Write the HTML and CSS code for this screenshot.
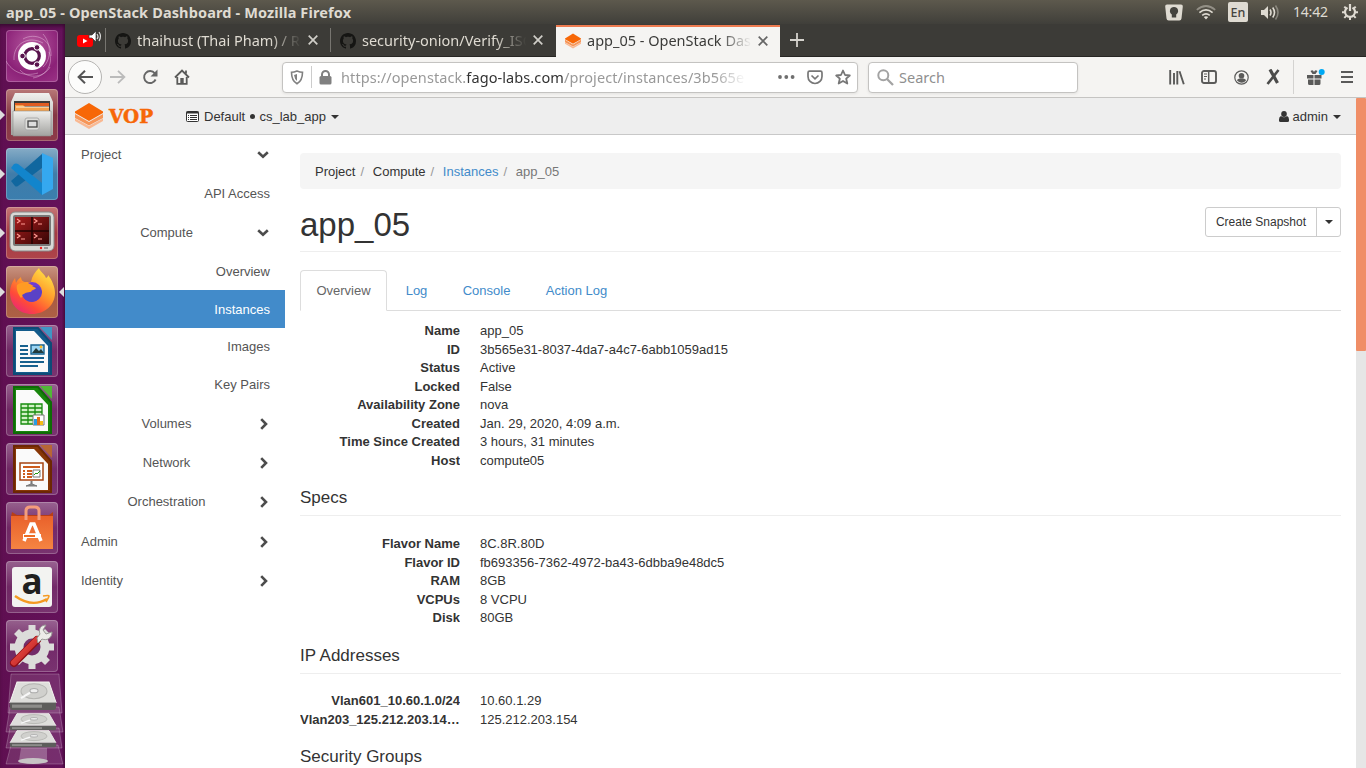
FILE: index.html
```html
<!DOCTYPE html>
<html lang="en">
<head>
<meta charset="utf-8">
<title>app_05 - OpenStack Dashboard</title>
<link rel="stylesheet" href="styles.css">
</head>
<body>
<svg class="defs" width="0" height="0" aria-hidden="true">
  <defs>
    <linearGradient id="metal" x1="0" y1="0" x2="0" y2="1"><stop offset="0" stop-color="#f0f0ee"/><stop offset="1" stop-color="#a2a29f"/></linearGradient>
    <linearGradient id="orange" x1="0" y1="0" x2="0" y2="1"><stop offset="0" stop-color="#e9612b"/><stop offset="1" stop-color="#f58442"/></linearGradient>
    <linearGradient id="flame" x1=".9" y1="0" x2=".2" y2="1"><stop offset="0" stop-color="#fff04d"/><stop offset=".45" stop-color="#ff9a2a"/><stop offset=".75" stop-color="#ff4b38"/><stop offset="1" stop-color="#e8257a"/></linearGradient>
    <linearGradient id="screen" x1="0" y1="0" x2="1" y2="1"><stop offset="0" stop-color="#a71c1c"/><stop offset="1" stop-color="#350505"/></linearGradient>
    <linearGradient id="red" x1="0" y1="0" x2="1" y2="1"><stop offset="0" stop-color="#f4574b"/><stop offset="1" stop-color="#b61a1f"/></linearGradient>
  </defs>
  <symbol id="stack" viewBox="0 0 28 26">
    <path fill="#f9b892" d="M0 15.500V18l14 8 14-8v-2.500L14 23z"/>
    <path fill="#f79557" d="M0 11v4l14 7.500L28 15v-4l-14 8z"/>
    <path fill="#f76707" d="M14 0 28 8.500v1.500L14 18 0 10V8.500z"/>
  </symbol>
  <symbol id="octocat" viewBox="0 0 16 16"><path fill="#151513" d="M8 0C3.580 0 0 3.580 0 8c0 3.540 2.290 6.530 5.470 7.590.4.070.55-.17.55-.38 0-.19-.01-.82-.01-1.490-2.010.37-2.530-.49-2.690-.94-.09-.23-.48-.94-.82-1.130-.28-.15-.68-.52-.01-.53.63-.01 1.080.58 1.230.82.72 1.210 1.870.87 2.330.66.07-.52.28-.87.51-1.070-1.780-.2-3.640-.89-3.640-3.950 0-.87.31-1.590.82-2.150-.08-.2-.36-1.020.08-2.120 0 0 .67-.21 2.200.82.64-.18 1.320-.27 2-.27s1.360.09 2 .27c1.530-1.040 2.200-.82 2.200-.82.44 1.100.16 1.920.08 2.120.51.56.82 1.270.82 2.150 0 3.070-1.870 3.750-3.650 3.950.29.25.54.73.54 1.480 0 1.070-.01 1.930-.01 2.200 0 .21.15.46.55.38A8.013 8.013 0 0 0 16 8c0-4.420-3.580-8-8-8z"/></symbol>
  <symbol id="close" viewBox="0 0 10 10"><path d="M.7.7l8.600 8.600M9.300.7.7 9.300" stroke="currentColor" stroke-width="1.700" fill="none"/></symbol>
  <symbol id="down" viewBox="0 0 12 8"><path d="M1.200 1.200 6 5.800l4.800-4.600" stroke="#4c4c4c" stroke-width="2.600" fill="none"/></symbol>
  <symbol id="right" viewBox="0 0 8 12"><path d="M1.200 1.200 6 6l-4.800 4.800" stroke="#4c4c4c" stroke-width="2.600" fill="none"/></symbol>
  <symbol id="drive" viewBox="0 0 48 28">
    <path d="M8 1h32l7 19H1z" fill="#dededb" stroke="#f5f5f2"/>
    <path d="M1 20h46v5q0 2-2 2H3q-2 0-2-2z" fill="#5d5d5b"/><path d="M3 22h30v3H3z" fill="#8d8d8a"/>
    <ellipse cx="25" cy="9.500" rx="13" ry="7" fill="#d0d0cd" stroke="#b3b3b0"/><ellipse cx="25" cy="9" rx="4" ry="2" fill="#eee" stroke="#aaa"/>
    <path d="M12 16l9-5" stroke="#f8f8f8" stroke-width="2"/>
  </symbol>
</svg>

<header class="panel">
  <span class="panel-title">app_05 - OpenStack Dashboard - Mozilla Firefox</span>
  <div class="indicators">
    <svg width="18" height="17" viewBox="0 0 18 17"><path fill="#dfdbd2" d="M2 .5h14q2 0 1.800 2l-1.300 12q-.2 2-2.200 2H3.700q-2 0-2.200-2L.2 2.500Q0 .5 2 .5z"/><path fill="#45443f" d="M9 3a4 4 0 0 1 2.200 7.400V13.500H6.800v-3.100A4 4 0 0 1 9 3z"/></svg>
    <svg class="wifi" width="20" height="15" viewBox="0 0 20 15" fill="none" stroke="#dfdbd2" stroke-width="1.700"><path opacity=".45" d="M.8 4.800q9.200-7.600 18.400 0"/><path d="M3.400 7.600q6.600-5.400 13.200 0M6.200 10.300q3.800-3 7.600 0"/><path d="M7.800 12 10 14.500 12.200 12q-2.200-1.500-4.400 0z" fill="#dfdbd2" stroke="none"/></svg>
    <span class="lang">En</span>
    <svg class="sound" width="20" height="17" viewBox="0 0 20 17"><path fill="#dfdbd2" d="M1 6h3l4-4v13l-4-4H1z"/><path fill="none" stroke="#dfdbd2" stroke-width="1.600" d="M10 5.500q2 3 0 6M12.700 3.500q3.600 5 0 10"/><path opacity=".4" fill="none" stroke="#dfdbd2" stroke-width="1.600" d="M15.500 1.500q5 7 0 14"/></svg>
    <span class="clock">14:42</span>
    <svg width="16" height="16" viewBox="0 0 16 16" fill="none" stroke="#dfdbd2"><path stroke-width="2.200" d="M5.500 3.600a5 5 0 1 0 5 0M8 0v7"/><path stroke-width="2" d="M0 8.300h3M13 8.300h3M2.300 2.600l2 2M13.700 2.600l-2 2M2.300 13.900l2-2M13.700 13.900l-2-2M8 13.300V16"/></svg>
  </div>
</header>

<div class="desktop">
  <nav class="launcher">
    <div class="tile dash"><svg viewBox="0 0 52 52"><g fill="none" stroke="#ecc5e2" opacity=".45"><path d="M8 30C7 14 22 5 37 13M43 22c5 12-3 24-16 26M17 9c12-7 29 0 28 17M14 40c9 10 25 7 30-3M37 4c8 9 9 25 0 33M0 31c6 11 18 16 32 12"/></g><circle cx="26" cy="26" r="14" fill="#fff"/><circle cx="26" cy="26" r="7.300" fill="none" stroke="#59134d" stroke-width="3.200"/><g fill="#59134d" stroke="#fff" stroke-width="1"><circle cx="16.500" cy="26" r="2.800"/><circle cx="31" cy="17.400" r="2.800"/><circle cx="31" cy="34.600" r="2.800"/></g></svg></div>
    <div class="tile files run"><svg viewBox="0 0 52 52"><path d="M9 4h34l4 9v33H5V13z" fill="url(#metal)"/><path d="M8 12h36v11H8z" fill="#3d3b39"/><path d="M9 14h34v3H9z" fill="#e05c22"/><path d="M9 16h8l2 2h24v5H9z" fill="#f6a04b"/><path d="M10 18h33" stroke="#fff3dd"/><path d="M7 22h38v25H7z" fill="url(#metal)" stroke="#8f8f8c" stroke-width=".6"/><rect x="19" y="29" width="14" height="12" rx="2" fill="#dededb" stroke="#aaa"/><rect x="22" y="32" width="9" height="6" fill="#ddd" stroke="#444" stroke-width="1.300"/></svg></div>
    <div class="tile code run"><svg viewBox="0 0 52 52"><path d="M5 33 36 6v14L12 38q-2 1-3 0z" fill="#10679f"/><path d="M5 20l3-4q2-1 4 0l24 19v12z" fill="#1285cc"/><path d="M36 5l11 5v31l-11 6z" fill="#35a8ef"/></svg></div>
    <div class="tile term run"><svg viewBox="0 0 52 52"><rect x="4" y="5" width="44" height="39" rx="5" fill="#d9d9d6" stroke="#888"/><rect x="7" y="8" width="38" height="31" rx="2" fill="#777"/><path d="M9 10h34v27H9z" fill="url(#screen)"/><path d="M26 10v27M9 24h34" stroke="#220303" stroke-width="1.500"/><g fill="none" stroke="#ff9b94" stroke-width="1.200"><path d="M11 12l3 2-3 2M15 17h4M28 12l3 2-3 2M32 17h4M11 27l3 2-3 2M15 32h4M28 27l3 2-3 2M32 32h4"/></g><circle cx="35" cy="41" r="1.200" fill="#e22"/><path d="M38 41h4" stroke="#999" stroke-width="2"/></svg></div>
    <div class="tile fox run focus"><svg viewBox="0 0 52 52"><path d="M33 2c2 5 5 5 7 10 2-1 2-2 2-3 4 5 7 12 7 18 0 12-10 21-23 21S4 39 4 26c0-5 2-10 5-14l1 5c1-3 4-5 5-6 0 3 2 5 5 5h5c1-6 4-10 8-14z" fill="url(#flame)"/><circle cx="26" cy="26" r="10" fill="#713bd5"/><path d="M11 19c4-3 9-3 13-1l7 4c-2 2-5 1-6 4-3 3-7 2-10 6-3-4-5-9-4-13z" fill="#ff9b24"/><path d="M16 29q4-3 8-3t6-4l-4-2q9-1 10 6-2 9-10 10-7 0-10-7z" fill="#5a42c6"/></svg></div>
    <div class="tile glass"><svg viewBox="0 0 52 52"><path d="M8 3h24l13 15v31H8z" fill="#135b8b" stroke="#0d4b77" stroke-width="2"/><path d="M34 2h12v13z" fill="#4096c4"/><path d="M10 6h18l14 15v26H10z" fill="#fafafa"/><path fill="none" stroke="#17618e" stroke-width="2.200" d="M14 21h8M14 25h8M14 29h8M14 33h24M14 37h24M14 41h18"/><path d="M25 20h13v9H25z" fill="#9ad5f4" stroke="#17618e" stroke-width="1.400"/><path d="M26 28l4-5 3 3 2-2 3 4z" fill="#233b3b"/><circle cx="35" cy="22" r="1.400" fill="#fb2"/></svg></div>
    <div class="tile glass"><svg viewBox="0 0 52 52"><path d="M8 3h24l13 15v31H8z" fill="#18850c" stroke="#0e6b06" stroke-width="2"/><path d="M34 2h12v13z" fill="#51b737"/><path d="M10 6h18l14 15v26H10z" fill="#fafafa"/><path fill="#d2f1c6" stroke="#168c0d" stroke-width="1.300" d="M15 20h21v20H15zM15 24h21M15 28h21M15 32h21M15 36h21M22 20v20M29 20v20"/><path d="M27 31h11v10H27z" fill="#fff" stroke="#777"/><path d="M28 35h3v6h-3z" fill="#279de6"/><path d="M31 33h3v8h-3z" fill="#e16d16"/><path d="M34 37h3v4h-3z" fill="#f5bd18"/></svg></div>
    <div class="tile glass"><svg viewBox="0 0 52 52"><path d="M8 3h24l13 15v31H8z" fill="#873606" stroke="#6c2703" stroke-width="2"/><path d="M34 2h12v13z" fill="#b76635"/><path d="M10 6h18l14 15v26H10z" fill="#fafafa"/><path d="M14 20h23v17H14z" fill="#fff" stroke="#a74412" stroke-width="1.500"/><path stroke="#cd5c1c" stroke-width="2" d="M17 24h17M17 28h2M21 28h5M17 31h2M21 31h5M17 34h2M21 34h5"/><path d="M27 27h7v7h-7z" fill="#fff" stroke="#777"/><path d="M28 32l2-2 1 1 3-3" fill="none" stroke="#291"/><path d="M25 38v3l-5 2h11l-5-2v-3" fill="#888" stroke="#777"/></svg></div>
    <div class="tile glass"><svg viewBox="0 0 52 52"><path d="M6 10l5 3h32l4-3v5H5z" fill="#b93e16"/><path d="M5 14h42v33H5z" fill="url(#orange)"/><path d="M20 18V9q0-4 4-4h5q4 0 4 4v9" fill="none" stroke="#f49d7c" stroke-width="3"/><path d="M18 39l7-17h3l7 17M22 33h9" fill="none" stroke="#fff" stroke-width="3.500"/><path d="M17 34h18" stroke="#fff" stroke-width="4"/><path d="M18 34h11" stroke="#ee6c23" stroke-width="2"/></svg></div>
    <div class="tile glass"><svg viewBox="0 0 52 52"><rect x="6" y="6" width="40" height="40" rx="3" fill="#f3f3f1"/><text x="26" y="33" class="amazon" text-anchor="middle">a</text><path d="M9 35q17 12 32 3" fill="none" stroke="#f59a22" stroke-width="2.400"/><path d="M37 35q6-1 6 0t-3 6" fill="none" stroke="#f59a22" stroke-width="1.600"/></svg></div>
    <div class="tile glass"><svg viewBox="0 0 52 52"><g stroke="#dcdcda" fill="none"><circle cx="26" cy="27" r="13" stroke-width="9"/><path d="M26 5v44M4 27h44M10.500 11.500l31 31M41.500 11.500l-31 31" stroke-width="7" stroke-dasharray="7 30 7"/></g><path d="M8 43L31 20" stroke="#921016" stroke-width="8" stroke-linecap="round"/><path d="M8 42.500L31 19.500" stroke="url(#red)" stroke-width="6" stroke-linecap="round"/><path d="M31 18l3-4c-2-5 1-9 6-9l-3 5 3 4 6-2c0 6-5 9-10 7l-4 4z" fill="#ecece8" stroke="#9a9a96"/></svg></div>
    <svg class="drives" width="60" height="94" viewBox="0 0 60 94"><g fill="#fff" fill-opacity=".12" stroke="#fff" stroke-opacity=".22"><path d="M6 1h48l3 39H3z"/><path d="M5 34h49l4 25H1z"/><path d="M5 55h49l3 20H1z"/><path d="M6 72h47l5 19H1z"/></g><path d="M16 75h26v13H14z" fill="#fff" fill-opacity=".25"/><ellipse cx="28" cy="88" rx="15" ry="3" fill="#c7c4c5"/><svg x="4" y="8" width="48" height="30" viewBox="0 0 48 28" preserveAspectRatio="none"><use href="#drive" width="48" height="28"/></svg><svg x="4" y="40" width="48" height="18" viewBox="0 0 48 28" preserveAspectRatio="none"><use href="#drive" width="48" height="28"/></svg><svg x="4" y="57" width="48" height="18" viewBox="0 0 48 28" preserveAspectRatio="none"><use href="#drive" width="48" height="28"/></svg></svg>
  </nav>

  <main class="browser">
    <div class="tabbar">
      <div class="tab pinned"><svg width="26" height="18" viewBox="0 0 26 18"><rect x="0" y="4" width="16" height="12" rx="3" fill="#f00"/><path d="M6 7.500v5l4.500-2.500z" fill="#fff"/><path d="M12 4h3l4-4v11l-4-4h-3z" fill="#fff" stroke="#333" stroke-width=".7"/><path d="M20 3q2 3 0 5M22 1q3 4 0 9" stroke="#ddd" fill="none" stroke-width="1.200"/></svg></div>
      <div class="tab"><svg class="fav" width="16" height="16"><use href="#octocat"/></svg><span class="label">thaihust (Thai Pham) / Re</span><svg class="x" width="10" height="10"><use href="#close"/></svg></div>
      <div class="tab"><svg class="fav" width="16" height="16"><use href="#octocat"/></svg><span class="label">security-onion/Verify_ISO</span><svg class="x" width="10" height="10"><use href="#close"/></svg></div>
      <div class="tab active"><svg class="fav" width="16" height="16"><use href="#stack"/></svg><span class="label">app_05 - OpenStack Dash</span><svg class="x" width="10" height="10"><use href="#close"/></svg></div>
      <svg class="plus" width="14" height="14" viewBox="0 0 14 14"><path d="M7 0v14M0 7h14" stroke="#d5d3cd" stroke-width="1.800"/></svg>
    </div>

    <div class="toolbar">
      <div class="back"><svg width="16" height="14" viewBox="0 0 16 14"><path d="M16 7H1.500M8 .8 1.600 7 8 13.200" fill="none" stroke="#555" stroke-width="2"/></svg></div>
      <div class="btn"><svg width="16" height="14" viewBox="0 0 16 14"><path d="M0 7h14.500M8 .8 14.400 7 8 13.200" fill="none" stroke="#bbb" stroke-width="1.800"/></svg></div>
      <div class="btn"><svg width="16" height="16" viewBox="0 0 16 16"><path d="M13.600 10.500A6 6 0 1 1 12.800 4.300" fill="none" stroke="#666" stroke-width="1.900"/><path d="M15.500.5v7h-7z" fill="#666"/></svg></div>
      <div class="btn"><svg width="16" height="16" viewBox="0 0 16 16"><path d="M1 8.500 8 1.500l7 7M3.300 8v6.800h9.400V8M12 1.500v3" fill="none" stroke="#5a5a59" stroke-width="1.800"/><path d="M6.300 15V9h3.400v6z" fill="#5a5a59"/></svg></div>
      <div class="urlbar">
        <svg class="shield" width="14" height="15" viewBox="0 0 14 15"><path d="M7 1q3 1.300 5.500 1.300 0 8.500-5.500 11.500-5.500-3-5.500-11.500Q4 2.300 7 1z" fill="none" stroke="#808080" stroke-width="1.600"/><path d="M7 4v7q-2.500-2-3-6z" fill="#808080"/></svg>
        <i class="split"></i>
        <svg class="lock" width="13" height="15" viewBox="0 0 13 15"><path d="M3 7V4.500a3.500 3.500 0 0 1 7 0V7" fill="none" stroke="#808080" stroke-width="2"/><rect x=".5" y="6" width="12" height="8.500" rx="1.500" fill="#808080"/></svg>
        <span class="url">https://openstack.<b>fago-labs.com</b>/project/instances/3b565e</span>
        <svg class="dots" width="17" height="4" viewBox="0 0 17 4" fill="#6f6f6f"><circle cx="2" cy="2" r="1.900"/><circle cx="8.300" cy="2" r="1.900"/><circle cx="14.600" cy="2" r="1.900"/></svg>
        <svg class="pocket" width="16" height="15" viewBox="0 0 16 15" fill="none" stroke="#777" stroke-width="1.700"><path d="M2.500 1.200h11q1.500 0 1.500 1.500V6.500a7 7 0 0 1-14 0V2.700q0-1.500 1.500-1.500z"/><path d="M4.500 5.500 8 8.800l3.500-3.300"/></svg>
        <svg width="16" height="16" viewBox="0 0 16 16"><path d="M8 1.500l2 4.500 4.800.5-3.600 3.200 1.100 4.800L8 12l-4.300 2.500 1.100-4.800L1.200 6.500 6 6z" fill="none" stroke="#777" stroke-width="1.800" stroke-linejoin="round"/></svg>
      </div>
      <div class="search"><svg width="17" height="17" viewBox="0 0 17 17"><circle cx="6.300" cy="6.300" r="5" fill="none" stroke="#a3a3a3" stroke-width="2"/><path d="M10 10l6 6" stroke="#a3a3a3" stroke-width="2.300"/></svg><span>Search</span></div>
      <div class="actions">
        <div class="btn"><svg width="16" height="15" viewBox="0 0 16 15"><path d="M1.200 0v14.500M5 3v11.500M8.300 1v13.500M10.500 1.300l4.300 12.900" fill="none" stroke="#5a5a59" stroke-width="1.900"/></svg></div>
        <div class="btn"><svg width="16" height="14" viewBox="0 0 16 14"><rect x="1" y="1" width="14" height="12" rx="2" fill="none" stroke="#5a5a59" stroke-width="1.900"/><path d="M7.700 1v12" stroke="#5a5a59" stroke-width="1.500"/><path d="M3 4h3M3 6.500h3M3 9h2" stroke="#5a5a59"/></svg></div>
        <div class="btn"><svg width="15" height="15" viewBox="0 0 15 15"><circle cx="7.500" cy="7.500" r="6.700" fill="none" stroke="#5a5a59" stroke-width="1.200"/><circle cx="7.500" cy="5.800" r="2.800" fill="#5a5a59"/><path d="M3 10.500q0-1.500 2.500-2h4q2.500.5 2.500 2-4 4.500-9 0z" fill="#5a5a59"/></svg></div>
        <div class="btn"><svg width="15" height="16" viewBox="0 0 15 16" fill="none" stroke="#4b4b4a"><path d="M1.500 15 12.500 1" stroke-width="2.600"/><path d="M4 .5 11.500 14" stroke-width="3.200"/></svg></div>
        <i class="rule"></i>
        <div class="btn"><svg width="18" height="17" viewBox="0 0 18 17"><path d="M0 6h6.500v3.500H0zM7.500 6h7v3.500h-7zM1 10.500h5.500V16H2.500Q1 16 1 14.500zM7.500 10.500h6v4q0 1.500-1.500 1.500H7.500zM3.500 2q2.500-2 3.500 1 1-3 3.500-1l-2 3h-3z" fill="#5a5a59"/><circle cx="14.700" cy="3" r="3" fill="#00a9f4"/></svg></div>
        <div class="btn"><svg width="12" height="12" viewBox="0 0 12 12"><path d="M0 1h12M0 6h12M0 11h12" stroke="#5a5a59" stroke-width="1.900"/></svg></div>
      </div>
    </div>

    <div class="page">
      <div class="site">
        <div class="navbar">
          <div class="brand"><svg width="28" height="26"><use href="#stack"/></svg><span>VOP</span></div>
          <div class="context"><svg width="13" height="11" viewBox="0 0 13 11"><rect x=".5" y=".5" width="12" height="10" rx="1" fill="#fff" stroke="#333"/><path d="M.5 1.500h12" stroke="#333" stroke-width="2"/><path d="M2 4.500h1M4 4.500h7M2 6.500h1M4 6.500h7M2 8.500h1M4 8.500h7" stroke="#333"/></svg><span>Default <em></em> cs_lab_app</span><i class="caret"></i></div>
          <div class="user"><svg width="10" height="11" viewBox="0 0 10 11" fill="#333"><ellipse cx="5" cy="3" rx="2.800" ry="3"/><path d="M2 5q3 2.500 6 0 2 .5 2 3.500v1.300Q10 11 8.500 11h-7Q0 11 0 9.800V8.500Q0 5.500 2 5z"/></svg><span>admin</span><i class="caret"></i></div>
        </div>
        <div class="body">
          <aside class="sidebar">
            <div class="row">Project<svg width="12" height="8"><use href="#down"/></svg></div>
            <div class="row leaf">API Access</div>
            <div class="row group"><span>Compute</span><svg width="12" height="8"><use href="#down"/></svg></div>
            <div class="row leaf ov">Overview</div>
            <div class="row leaf small current">Instances</div>
            <div class="row leaf small">Images</div>
            <div class="row leaf small">Key Pairs</div>
            <div class="row group"><span>Volumes</span><svg class="r" width="8" height="12"><use href="#right"/></svg></div>
            <div class="row group"><span>Network</span><svg class="r" width="8" height="12"><use href="#right"/></svg></div>
            <div class="row group"><span>Orchestration</span><svg class="r" width="8" height="12"><use href="#right"/></svg></div>
            <div class="row low">Admin<svg class="r" width="8" height="12"><use href="#right"/></svg></div>
            <div class="row low">Identity<svg class="r" width="8" height="12"><use href="#right"/></svg></div>
          </aside>
          <section class="content">
            <div class="crumbs"><span>Project</span><i>/</i><span>Compute</span><i>/</i><a>Instances</a><i>/</i><span class="muted">app_05</span></div>
            <div class="heading"><h1>app_05</h1><div class="split-btn"><span>Create Snapshot</span><span class="drop"><i class="caret"></i></span></div></div>
            <div class="tabs"><a class="on">Overview</a><a>Log</a><a>Console</a><a>Action Log</a></div>
            <dl>
              <dt>Name</dt><dd>app_05</dd>
              <dt>ID</dt><dd>3b565e31-8037-4da7-a4c7-6abb1059ad15</dd>
              <dt>Status</dt><dd>Active</dd>
              <dt>Locked</dt><dd>False</dd>
              <dt>Availability Zone</dt><dd>nova</dd>
              <dt>Created</dt><dd>Jan. 29, 2020, 4:09 a.m.</dd>
              <dt>Time Since Created</dt><dd>3 hours, 31 minutes</dd>
              <dt>Host</dt><dd>compute05</dd>
            </dl>
            <h4>Specs</h4>
            <dl>
              <dt>Flavor Name</dt><dd>8C.8R.80D</dd>
              <dt>Flavor ID</dt><dd>fb693356-7362-4972-ba43-6dbba9e48dc5</dd>
              <dt>RAM</dt><dd>8GB</dd>
              <dt>VCPUs</dt><dd>8 VCPU</dd>
              <dt>Disk</dt><dd>80GB</dd>
            </dl>
            <h4 class="ip">IP Addresses</h4>
            <dl>
              <dt>Vlan601_10.60.1.0/24</dt><dd>10.60.1.29</dd>
              <dt>Vlan203_125.212.203.144/28</dt><dd>125.212.203.154</dd>
            </dl>
            <h4>Security Groups</h4>
          </section>
        </div>
      </div>
      <div class="scrollbar"><div class="thumb"></div></div>
    </div>
  </main>
</div>
</body>
</html>
```

FILE: styles.css
```css
* { box-sizing: border-box; }
html, body { margin: 0; height: 768px; overflow: hidden; }
body { display: flex; flex-direction: column; width: 1366px; font: 13px/1.42857 "Liberation Sans", Arial, sans-serif; color: #333; }
svg { display: block; flex: none; }
i, em { font-style: normal; }
.defs { position: absolute; }

.panel { flex: none; height: 24px; display: flex; align-items: center; justify-content: space-between; padding: 0 8px 0 6px; background: linear-gradient(#5d594d, #403f3a); color: #dfdbd2; font-family: "Noto Sans", "Open Sans", sans-serif; }
.panel-title { margin-top: -1px; font-size: 14.5px; font-weight: 700; letter-spacing: .13px; line-height: 24px; white-space: nowrap; }
.indicators { display: flex; align-items: center; }
.wifi { margin-left: 13px; }
.lang { width: 20px; height: 20px; margin-left: 12px; border-radius: 2px; background: #dfdbd2; color: #45443f; font-size: 12.5px; font-weight: 500; line-height: 21px; text-align: center; }
.sound { margin-left: 12px; }
.clock { width: 36px; margin: 0 13px 0 13px; font-size: 14px; letter-spacing: -.2px; white-space: nowrap; }

.desktop { flex: 1; display: flex; min-height: 0; }
.launcher { flex: none; width: 65px; height: 744px; display: flex; flex-direction: column; gap: 7px; padding: 6px 7px 0 6px; background: linear-gradient(90deg, #5f0f51, #64125a 95%, #4b0b40); overflow: hidden; box-shadow: inset 0 4px 4px -2px #350a2e; }
.tile { position: relative; flex: none; width: 52px; height: 52px; border-radius: 4px; box-shadow: inset 0 0 0 1px rgba(255,255,255,.23); }
.tile svg { width: 52px; height: 52px; }
.dash { background: radial-gradient(circle at 50% 30%, #b65aa0, #8b2177 65%, #9b3386); }
.files { background: linear-gradient(#b97878, #853744 50%, #8e3c49); }
.code { background: linear-gradient(#86acc6, #407ca9 50%, #3b7eae); }
.term { background: linear-gradient(#c57676, #a53b43 50%, #ae444a); }
.fox { background: linear-gradient(#c89381, #a65b43 50%, #ae6045); }
.glass { background: linear-gradient(rgba(255,255,255,.34), rgba(255,255,255,.1) 50%, rgba(255,255,255,.14)); }
.run::before, .focus::after { content: ""; position: absolute; top: 21px; border: 5px solid transparent; }
.run::before { left: -6px; border-left-color: #ddd; border-right: 0; }
.focus::after { right: -6px; border-right-color: #ddd; border-left: 0; }
.amazon { font: 700 35px "Open Sans", sans-serif; fill: #202020; }
.drives { margin: -6px 0 0 -1px; }

.browser { flex: 1; min-width: 0; display: flex; flex-direction: column; }
.tabbar { flex: none; height: 33px; display: flex; align-items: stretch; background: #3c3b37; border-bottom: 1px solid #272623; color: #dfdbd2; font: 14.5px "Noto Sans", sans-serif; }
.tab { display: flex; align-items: center; width: 225px; padding: 0 13px 1px 9px; background: linear-gradient(#777570, #777570) right 50% / 1px 24px no-repeat; }
.tab.pinned { width: 41px; padding: 0 0 0 12px; }
.tab:nth-child(3) { background: none; }
.fav { margin-top: 2px; }
.label { flex: 1; margin-left: 6px; overflow: hidden; white-space: nowrap; -webkit-mask-image: linear-gradient(90deg, #000 80%, transparent 99%); mask-image: linear-gradient(90deg, #000 80%, transparent 99%); }
.x { margin: 1px 0 0 5px; color: #d0cec8; }
.tab.active { width: 224px; height: 33px; background: #f5f4f2; border-top: 2px solid #ee7b50; margin-top: 1px; color: #3b3b39; padding: 0 12px 5px 9px; }
.active .x { color: #666; }
.plus { align-self: center; margin-left: 10px; }

.toolbar { flex: none; height: 41px; display: flex; align-items: center; padding: 0 3px 0 3px; background: #f5f4f2; border-bottom: 1px solid #c5c4c2; font: 14.500px "Noto Sans", sans-serif; }
.back { width: 34px; height: 34px; display: flex; align-items: center; justify-content: center; border: 1px solid #b5b4b2; border-radius: 50%; background: #fcfcfb; }
.btn { width: 32px; height: 32px; display: flex; align-items: center; justify-content: center; }
.urlbar, .search { height: 31px; display: flex; align-items: center; background: #fff; border: 1px solid #c4c3c1; border-radius: 4px; box-shadow: 0 1px 3px rgba(0,0,0,.08); }
.urlbar { width: 576px; margin-left: 84px; padding: 0 6px 0 7px; }
.split { width: 1px; height: 22px; margin: 0 8px 0 7px; background: #ccc; }
.lock { margin-left: -1px; }
.url { width: 405px; margin-left: 9px; overflow: hidden; white-space: nowrap; color: #999; letter-spacing: .09px; -webkit-mask-image: linear-gradient(90deg, #000 92%, transparent); mask-image: linear-gradient(90deg, #000 92%, transparent); }
.url b { font-weight: 400; color: #333; }
.dots { margin-left: auto; }
.pocket { margin: 0 12px; }
.search { width: 210px; margin-left: 10px; padding-left: 8px; gap: 5px; color: #8f8f8f; }
.actions { margin-left: auto; display: flex; align-items: center; }
.rule { width: 1px; height: 34px; margin: 0 6px 0 4px; background: #d4d3d1; }
.rule + .btn { width: 31px; }

.page { flex: 1; display: flex; min-height: 0; background: #fff; }
.site { flex: 1; min-width: 0; display: flex; flex-direction: column; }
.navbar { flex: none; height: 37px; display: flex; align-items: center; padding: 0 15px 0 10px; background: #eee; border-bottom: 1px solid #c8c8c8; }
.brand { display: flex; align-items: center; gap: 6px; width: 111px; color: #f76707; font: 700 18.5px/24px "DejaVu Serif", serif; -webkit-text-stroke: .5px #f76707; }
.brand span { padding-top: 1px; }
.context, .user { display: flex; align-items: center; gap: 5px; }
.context span, .user span { padding-top: 2px; }
.context .caret, .user .caret { margin-top: 1px; }
.context em { display: inline-block; width: 5px; height: 5px; margin: 0 1px 2px; border-radius: 50%; background: #333; }
.user { margin-left: auto; gap: 4px; }
.caret { width: 0; height: 0; border: 4px solid transparent; border-top-color: #333; border-bottom: 0; }
.user .caret { margin-left: 1px; }
.scrollbar { flex: none; width: 10px; background: #e6e6e6; }
.thumb { height: 253px; background: #f08e67; border-radius: 1px; }

.body { flex: 1; min-height: 0; display: flex; overflow: hidden; }
.sidebar { flex: none; width: 220px; color: #555; }
.row { height: 39.2px; display: flex; align-items: center; justify-content: space-between; padding: 1px 16px 0; }
.row .r { margin: -1px 1px 0 0; }
.leaf { height: 39px; justify-content: flex-end; padding-right: 15px; }
.ov { height: 37.6px; padding-top: 2.5px; }
.small { height: 37.7px; padding-top: 1.6px; }
.small + .group { height: 40px; padding-top: 2px; }
.low { padding-top: 2px; }
.current { background: #428bca; color: #fff; padding-top: 2px; }
.group { padding-left: 0; }
.group span { width: 203px; margin-right: -15px; text-align: center; }

.content { flex: 1; padding: 18px 15px 0; }
.crumbs { height: 36px; display: flex; align-items: center; padding: 2px 15px 0; background: #f5f5f5; border-radius: 4px; }
.crumbs i { width: 17.3px; padding-left: 5px; color: #999; }
.crumbs a { color: #428bca; }
.crumbs .muted { color: #777; }
.heading { height: 63px; display: flex; align-items: center; justify-content: space-between; border-bottom: 1px solid #eee; }
h1 { margin: 10px 0 0; font-size: 33px; line-height: 36px; font-weight: 400; }
.split-btn { display: flex; height: 30px; margin-top: 4px; border: 1px solid #ccc; border-radius: 3px; font-size: 12px; line-height: 28px; }
.split-btn span { padding: 0 10px; }
.split-btn .drop { width: 24px; padding: 0; display: flex; align-items: center; justify-content: center; border-left: 1px solid #ccc; }
.tabs { display: flex; height: 41px; margin: 18px 0 11px; border-bottom: 1px solid #ddd; }
.tabs a { height: 41px; margin-right: 2px; padding: 0 15.700px; border: 1px solid transparent; line-height: 40px; color: #428bca; }
.tabs .on { padding: 0 15.400px; color: #666; background: #fff; border-color: #ddd #ddd #fff; border-radius: 4px 4px 0 0; }
dl { display: grid; grid-template-columns: 160px 1fr; column-gap: 20px; margin: 0; }
dt { overflow: hidden; text-overflow: ellipsis; white-space: nowrap; text-align: right; font-weight: 700; }
dd { margin: 0; }
h4 { margin: 18px 0 18.9px; padding-bottom: 8.1px; border-bottom: 1px solid #eee; font-size: 17px; line-height: 18.7px; font-weight: 400; }
h4.ip { margin-top: 18.6px; margin-bottom: 18.4px; padding-bottom: 7.8px; }
```
